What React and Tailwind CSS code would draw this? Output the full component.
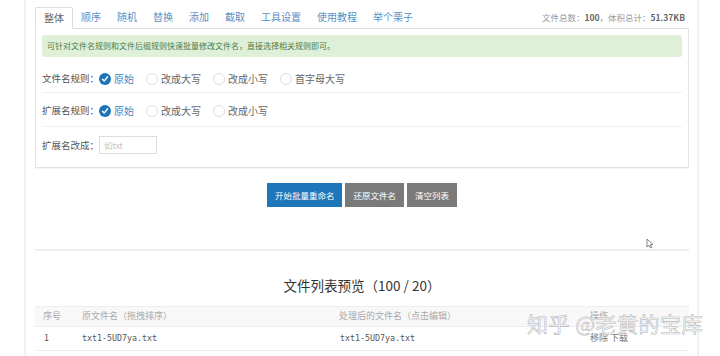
import React from 'react';

const tabs = ['整体', '顺序', '随机', '替换', '添加', '截取', '工具设置', '使用教程', '举个栗子'];

const Radio = ({ checked, label }) => (
  <label className="flex items-center mr-[12px] whitespace-nowrap">
    {checked ? (
      <span className="w-[12px] h-[12px] rounded-full bg-[#1f73b7] flex items-center justify-center">
        <svg width="8" height="8" viewBox="0 0 8 8" fill="none">
          <path d="M1.5 4.2L3.3 6L6.5 1.8" stroke="#fff" strokeWidth="1.4" strokeLinecap="round" strokeLinejoin="round" />
        </svg>
      </span>
    ) : (
      <span className="w-[12px] h-[12px] rounded-full border border-[#ddd] bg-white" />
    )}
    <span className={`ml-[3px] ${checked ? 'text-[#3a82c4]' : 'text-[#666]'}`}>{label}</span>
  </label>
);

const App = () => {
  return (
    <div
      className="relative w-[720px] h-[356px] bg-white overflow-hidden flex"
      style={{ fontFamily: '"Noto Sans CJK SC", "Liberation Sans", sans-serif' }}
    >
      <div className="w-[24px] shrink-0" />
      <div className="w-[2px] shrink-0 bg-[#f1f1f1]" />

      <main className="w-[671px] shrink-0 pl-[9px] pr-[8px]">
        {/* tabs */}
        <div className="flex items-end h-[29px] border-b border-[#ddd]">
          {tabs.map((t, i) => (
            <div
              key={t}
              className={`h-[22px] px-[8px] flex items-center text-[10px] leading-none whitespace-nowrap ${
                i === 0
                  ? 'border border-[#ddd] border-b-white -mb-px bg-white text-[#666] rounded-t-[2px]'
                  : 'text-[#5a8fc4]'
              }`}
            >
              {t}
            </div>
          ))}
          <div className="ml-auto mr-[4px] self-center mt-[7px] text-[8.5px] text-[#999] whitespace-nowrap">
            文件总数：<b className="text-[#666]">100</b>，体积总计：<b className="text-[#666]">51.37KB</b>
          </div>
        </div>

        {/* panel */}
        <div className="border border-t-0 border-[#e3e3e3] px-[6px] pt-[6px] pb-[4px] shadow-[0_1px_1px_rgba(0,0,0,0.04)]">
          <div className="h-[22px] bg-[#dff0d8] rounded-[2px] flex items-center pl-[5px] text-[8px] text-[#4f7a44] whitespace-nowrap">
            可针对文件名规则和文件后缀规则快速批量修改文件名，直接选择相关规则即可。
          </div>

          <div className="h-[36px] pt-[8px] flex items-center border-b border-[#f0f0f0] text-[10px]">
            <span className="w-[57px] shrink-0 whitespace-nowrap text-[9.5px] text-[#555]">文件名规则：</span>
            <Radio checked label="原始" />
            <Radio label="改成大写" />
            <Radio label="改成小写" />
            <Radio label="首字母大写" />
          </div>

          <div className="h-[34px] pt-[2px] flex items-center border-b border-[#f0f0f0] text-[10px]">
            <span className="w-[57px] shrink-0 whitespace-nowrap text-[9.5px] text-[#555]">扩展名规则：</span>
            <Radio checked label="原始" />
            <Radio label="改成大写" />
            <Radio label="改成小写" />
          </div>

          <div className="h-[36px] flex items-center text-[10px]">
            <span className="w-[57px] shrink-0 whitespace-nowrap text-[9.5px] text-[#555]">扩展名改成：</span>
            <div className="w-[58px] h-[18px] border border-[#ddd] flex items-center pl-[4px] text-[8.5px] text-[#c4c4c4]">
              如txt
            </div>
          </div>
        </div>

        {/* buttons */}
        <div className="flex justify-center gap-[3px] mt-[15px] text-[8.5px] text-white">
          <button className="h-[24px] px-[8px] bg-[#1f76b9] whitespace-nowrap">开始批量重命名</button>
          <button className="h-[24px] px-[8px] bg-[#7a7a7a] whitespace-nowrap">还原文件名</button>
          <button className="h-[24px] px-[8px] bg-[#7a7a7a] whitespace-nowrap">清空列表</button>
        </div>

        <div className="mt-[42px] h-[2px] bg-[#eeeeee]" />

        <h2 className="mt-[28px] text-center text-[13.5px] leading-none text-[#333]">
          文件列表预览（100 / 20）
        </h2>

        {/* table */}
        <div className="mt-[13px] text-[9px]">
          <div className="h-[21px] flex items-center bg-[#f8f8f8] border-t border-b border-[#eee] text-[#aaa]">
            <span className="w-[47px] pl-[8px]">序号</span>
            <span className="w-[257px]">原文件名（拖拽排序）</span>
            <span className="w-[251px]">处理后的文件名（点击编辑）</span>
            <span>操作</span>
          </div>
          <div className="h-[24px] flex items-center border-b border-[#eee] text-[#555]">
            <span className="w-[47px] pl-[9px]">1</span>
            <span className="w-[258px] text-[8.3px]" style={{ fontFamily: '"DejaVu Sans Mono", monospace' }}>
              txt1-5UD7ya.txt
            </span>
            <span className="w-[250px] text-[8.3px]" style={{ fontFamily: '"DejaVu Sans Mono", monospace' }}>
              txt1-5UD7ya.txt
            </span>
            <span className="text-[#777]">移除 下载</span>
          </div>
        </div>
      </main>

      <div className="w-[2px] shrink-0 bg-[#f1f1f1]" />
      <div className="flex-1" />

      {/* cursor */}
      <svg className="absolute left-[646px] top-[238px]" width="8" height="11" viewBox="0 0 8 11">
        <path d="M1 1L1 9L3 7.2L4.5 10L5.8 9.4L4.4 6.7L7 6.5Z" fill="#fff" stroke="#666" strokeWidth="0.8" />
      </svg>

      {/* watermark */}
      <div className="absolute left-[527px] top-[313px] text-[21px] leading-none text-[rgba(255,255,255,0.75)] [-webkit-text-stroke:0.6px_#b8b8b8] tracking-[0.5px] whitespace-nowrap">
        知乎 @老黄的宝库
      </div>
    </div>
  );
};

export default App;
